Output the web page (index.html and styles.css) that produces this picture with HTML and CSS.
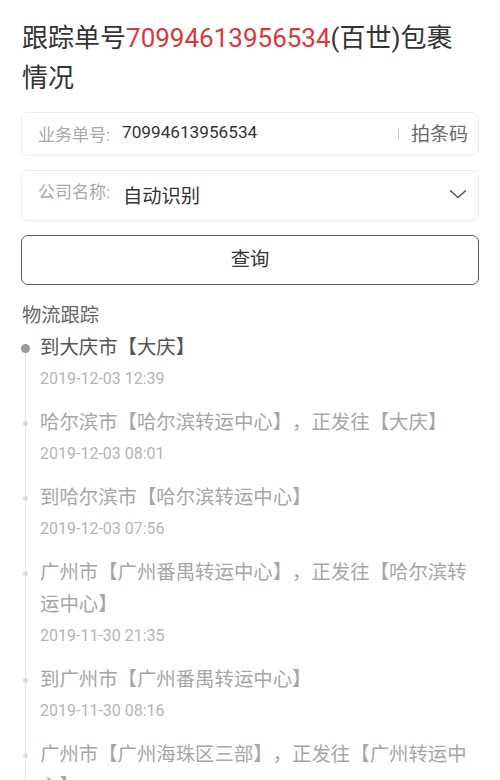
FILE: index.html
```html
<!DOCTYPE html>
<html lang="zh-CN">
<head>
<meta charset="utf-8">
<link rel="stylesheet" href="styles.css">
</head>
<body>
<div class="page">
  <h1 class="title">跟踪单号<span class="red">70994613956534</span>(百世)包裹情况</h1>

  <div class="field field-no">
    <span class="label">业务单号:</span>
    <span class="value">70994613956534</span>
    <span class="sep"></span>
    <span class="scan">拍条码</span>
  </div>

  <div class="field field-co">
    <span class="label label-top">公司名称:</span>
    <span class="value value-lg">自动识别</span>
    <svg class="chev" width="18" height="10" viewBox="0 0 18 10"><path d="M1 1.2 L9 8.6 L17 1.2" fill="none" stroke="#555" stroke-width="1.4"/></svg>
  </div>

  <button class="btn">查询</button>

  <div class="section">物流跟踪</div>

  <ul class="timeline">
    <li class="item active">
      <div class="desc">到大庆市【大庆】</div>
      <div class="date">2019-12-03 12:39</div>
    </li>
    <li class="item">
      <div class="desc">哈尔滨市【哈尔滨转运中心】，正发往【大庆】</div>
      <div class="date">2019-12-03 08:01</div>
    </li>
    <li class="item">
      <div class="desc">到哈尔滨市【哈尔滨转运中心】</div>
      <div class="date">2019-12-03 07:56</div>
    </li>
    <li class="item">
      <div class="desc">广州市【广州番禺转运中心】，正发往【哈尔滨转运中心】</div>
      <div class="date">2019-11-30 21:35</div>
    </li>
    <li class="item">
      <div class="desc">到广州市【广州番禺转运中心】</div>
      <div class="date">2019-11-30 08:16</div>
    </li>
    <li class="item">
      <div class="desc">广州市【广州海珠区三部】，正发往【广州转运中心】</div>
      <div class="date">2019-11-30 07:20</div>
    </li>
  </ul>
</div>
</body>
</html>
```

FILE: styles.css
```css
* { box-sizing: border-box; }
html, body { margin: 0; padding: 0; background: #fff; }
body {
  font-family: Roboto, "Noto Sans CJK SC", sans-serif;
  color: #333;
  overflow: hidden;
  text-spacing-trim: space-all;
}
.page {
  padding: 18px 21px 0 21px;
}
.title {
  margin: 0 0 0 1px;
  font-size: 26px;
  line-height: 40px;
  font-weight: 400;
  color: #333;
  width: 445px;
}
.red { color: #e2353a; }

.field {
  display: flex;
  align-items: center;
  border: 1px solid #ededed;
  border-radius: 7px;
  padding: 0 10px 0 16px;
  margin-top: 14px;
}
.field-no { height: 44px; }
.field-co { height: 51px; margin-top: 14px; }
.label {
  font-size: 17px;
  color: #a8a8a8;
  width: 84px;
  flex: none;
  margin-top: -2px;
}
.label-top { margin-top: -10px; }
.value {
  font-size: 17.2px;
  color: #333;
  flex: 1;
  margin-top: -4px;
}
.value-lg { font-size: 19.3px; margin-top: -2px; padding-left: 1px; }
.sep {
  width: 1px;
  height: 12px;
  background: #cfcfcf;
  margin-right: 12px;
  margin-top: 0;
}
.scan {
  font-size: 19px;
  color: #6a6a6a;
  margin-top: -4px;
}
.chev { margin-right: 1px; margin-top: -3px; }

.btn {
  display: block;
  width: 100%;
  height: 50px;
  margin-top: 14px;
  border: 1px solid #5a5a5a;
  border-radius: 7px;
  background: #fff;
  font-family: Roboto, "Noto Sans CJK SC", sans-serif;
  font-size: 19.3px;
  color: #333;
  padding: 0 0 4px 0;
}

.section {
  margin-top: 16px;
  font-size: 19.3px;
  line-height: 30px;
  color: #666;
  margin-left: 1px;
}

.timeline {
  list-style: none;
  margin: 1px 0 0 0;
  padding: 0;
}
.item {
  position: relative;
  padding: 0 0 13px 19px;
}
.item::before {
  content: "";
  position: absolute;
  left: 4px;
  top: 0;
  bottom: 0;
  width: 1px;
  background: #e6e6e6;
}
.item.active::before { top: 16px; }
.item::after {
  content: "";
  position: absolute;
  left: 2px;
  top: 14px;
  width: 5px;
  height: 5px;
  border-radius: 50%;
  background: #dcdcdc;
}
.item.active::after {
  left: 0;
  top: 12px;
  width: 9px;
  height: 9px;
  background: #9a9a9a;
}
.desc {
  font-size: 19.4px;
  line-height: 32px;
  color: #a6a6a6;
}
.item.active .desc { color: #555; }
.date {
  font-size: 16px;
  line-height: 30px;
  color: #b5b5b5;
}
```
